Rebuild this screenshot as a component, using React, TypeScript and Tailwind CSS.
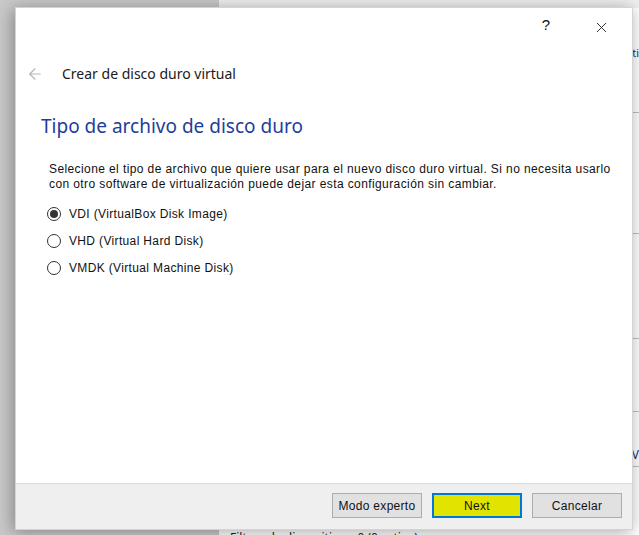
import { ArrowLeft, X } from "lucide-react";

const options = [
  { label: "VDI (VirtualBox Disk Image)", checked: true },
  { label: "VHD (Virtual Hard Disk)", checked: false },
  { label: "VMDK (Virtual Machine Disk)", checked: false },
];

function Radio({ checked }: { checked: boolean }) {
  return (
    <span className="flex h-[14px] w-[14px] items-center justify-center rounded-full border border-[#333333] bg-white">
      {checked && <span className="h-[8px] w-[8px] rounded-full bg-[#333333]" />}
    </span>
  );
}

export default function App() {
  return (
    <div className="relative h-[535px] w-[639px] overflow-hidden font-['Noto_Sans',sans-serif]">
      {/* background windows */}
      <div className="flex h-full w-full">
        <div className="h-full w-[219px] bg-[#c9c9c9]" />
        <div className="flex h-full flex-1 flex-col bg-white">
          <div className="h-[8px] bg-[#efefef]" />
          <div className="flex flex-1 flex-col items-end text-[11px] leading-[14px] text-[#1b2a6b]">
            <div className="mt-[38px]">ti</div>
            <div className="mt-[52px] h-px w-[8px] bg-[#bdbdbd]" />
            <div className="mt-[120px] h-px w-[8px] bg-[#bdbdbd]" />
            <div className="mt-[104px] h-px w-[8px] bg-[#bdbdbd]" />
            <div className="mt-[72px] h-px w-[8px] bg-[#bdbdbd]" />
            <div className="mt-[36px] text-[12px]">V</div>
            <div className="mt-[4px] h-px w-[8px] bg-[#bdbdbd]" />
          </div>
          <div className="h-[5px] pl-[11px] text-[12px] leading-[16px] text-[#222]">
            Filtros de dispositivos: 0 (0 activo)
          </div>
        </div>
      </div>

      {/* dialog */}
      <div className="absolute left-[15px] top-[7px] flex h-[523px] w-[618px] flex-col border border-[#d4d4d4] bg-white shadow-[-2px_2px_16px_rgba(0,0,0,0.35)]">
        <div className="flex h-[38px] items-center justify-end gap-[43px] pr-[22px] text-[#111]">
          <span className="mb-[3px] text-[15px] font-['Liberation_Sans',sans-serif]">?</span>
          <X size={17} strokeWidth={1.2} />
        </div>

        <div className="flex items-center gap-[18px] pl-[10px] pt-[17px]">
          <ArrowLeft size={18} strokeWidth={1.5} className="text-[#b5b5b5]" />
          <span className="text-[14px] text-[#1a1a1a]">Crear de disco duro virtual</span>
        </div>

        <h1 className="pl-[25px] pt-[29px] text-[19px] leading-[26px] text-[#1f3d9a]">
          Tipo de archivo de disco duro
        </h1>

        <p className="pl-[33px] pt-[23px] text-[12px] leading-[15px] tracking-[0.4px] whitespace-nowrap text-[#111] font-['Liberation_Sans',sans-serif]">
          Selecione el tipo de archivo que quiere usar para el nuevo disco duro virtual. Si no necesita usarlo
          <br />
          con otro software de virtualización puede dejar esta configuración sin cambiar.
        </p>

        <div className="flex flex-col gap-[10px] pl-[31px] pt-[13px] font-['Liberation_Sans',sans-serif]">
          {options.map((o) => (
            <label key={o.label} className="flex h-[17px] items-center gap-[8px] text-[12px] tracking-[0.35px] text-[#111]">
              <Radio checked={o.checked} />
              {o.label}
            </label>
          ))}
        </div>

        <div className="flex-1" />

        <div className="flex h-[46px] items-start justify-end gap-[10px] border-t border-[#dadada] bg-[#efefef] pr-[10px] pt-[9px] text-[12px] tracking-[0.3px] text-[#111] font-['Liberation_Sans',sans-serif]">
          <button className="h-[25px] w-[90px] border border-[#adadad] bg-[#e1e1e1]">Modo experto</button>
          <button className="h-[25px] w-[90px] border-2 border-[#0078d7] bg-[#e3e300]">Next</button>
          <button className="h-[25px] w-[90px] border border-[#adadad] bg-[#e1e1e1]">Cancelar</button>
        </div>
      </div>
    </div>
  );
}
